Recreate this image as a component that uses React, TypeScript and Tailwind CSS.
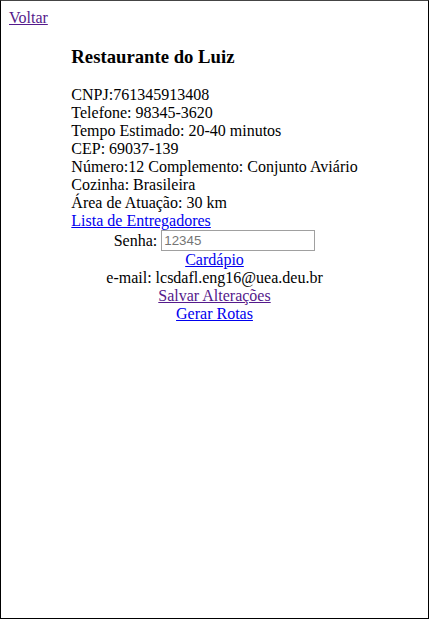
export default function App() {
  return (
    <div className="h-[619px] w-[429px] box-border border border-black border-t-[#444] bg-white p-2 text-[16px] leading-[18px] text-black font-['Liberation_Serif','Times_New_Roman',serif]">
      <a href="#" className="text-[#551a8b] underline">
        Voltar
      </a>
      <div className="flex flex-col items-center">
        <div className="w-fit">
          <h3 className="my-[19px] text-[18.72px] leading-[21px] font-bold">Restaurante do Luiz</h3>
          <div>CNPJ:761345913408</div>
          <div>Telefone: 98345-3620</div>
          <div>Tempo Estimado: 20-40 minutos</div>
          <div>CEP: 69037-139</div>
          <div>Número:12 Complemento: Conjunto Aviário</div>
          <div>Cozinha: Brasileira</div>
          <div>Área de Atuação: 30 km</div>
          <div>
            <a href="#" className="text-[#0000ee] underline">
              Lista de Entregadores
            </a>
          </div>
        </div>
        <div className="flex h-[21px] items-center">
          <span className="mr-[4px]">Senha:</span>
          <input
            type="password"
            placeholder="12345"
            className="box-border h-[21px] w-[154px] border border-[#a0a0a0] px-[2px] text-[13.33px] font-['Liberation_Sans',Arial,sans-serif] placeholder:text-[#757575] outline-none"
          />
        </div>
        <a href="#" className="text-[#0000ee] underline">
          Cardápio
        </a>
        <div>e-mail: lcsdafl.eng16@uea.deu.br</div>
        <a href="#" className="text-[#551a8b] underline">
          Salvar Alterações
        </a>
        <a href="#" className="text-[#0000ee] underline">
          Gerar Rotas
        </a>
      </div>
    </div>
  );
}
